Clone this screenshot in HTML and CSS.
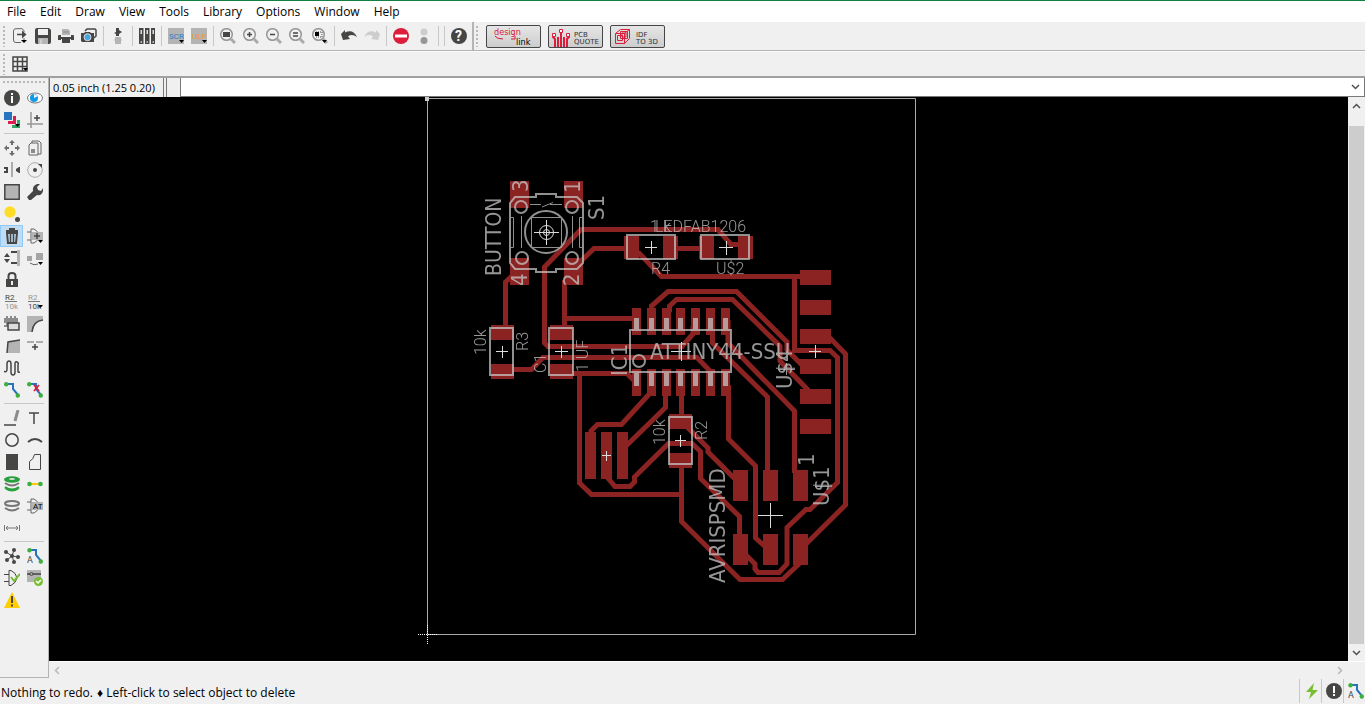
FILE: index.html
```html
<!DOCTYPE html>
<html lang="en">
<head>
    <meta charset="UTF-8">
    <title>Board</title>
    <link rel="stylesheet" href="styles.css">
</head>
<body>
    <nav class="menubar">
        <button>File</button>
        <button>Edit</button>
        <button>Draw</button>
        <button>View</button>
        <button>Tools</button>
        <button>Library</button>
        <button>Options</button>
        <button>Window</button>
        <button>Help</button>
    </nav>

    <div class="toolbar">
        <span class="grip"></span>
        <button class="tool" aria-label="Open"><svg viewBox="0 0 16 16"><path class="thin" d="M12 4V2.500L10 .7H4Q1.500 .7 1.500 3v9q0 2.500 2.500 2.500h5M12 10v2"/><path class="line" d="M5 6.500h6"/><path class="dark" d="M10 2.500l4.500 4-4.500 4z"/><path d="M9 12h6l-3 3z"/></svg></button>
        <button class="tool" aria-label="Save"><svg viewBox="0 0 16 16"><path class="dark" d="M2 0h12l2 2v12q0 2-2 2H2q-2 0-2-2V2q0-2 2-2z"/><path fill="#f0f0f0" d="M3 1h10v6H3z"/><path class="mid" d="M3 10h10v6H3z"/><path class="pale" d="M5 11h2v5H5z"/></svg></button>
        <button class="tool" aria-label="Print"><svg viewBox="0 0 16 16"><path class="mid" d="M4 1h6l2 2v4H4z"/><path d="M5 4h6" stroke="#8c8c8c"/><path class="dark" d="M0 8q0-1 1-1h2v2h10V7h2q1 0 1 1v4h-3v-1H3v1H0zM4 11h8v4H4z"/></svg></button>
        <button class="tool" aria-label="CAM processor"><svg viewBox="0 0 16 16"><path class="line" d="M4 3l2-2h8l1 1v6l-2 2"/><path class="dark" d="M0 5h3l1-1h5l1 1h3v9H1l-1-1z"/><circle cx="6.500" cy="9.200" r="3.500" fill="#45a9e6" stroke="#ddd"/></svg></button>
        <span class="sep"></span>
        <button class="tool" aria-label="Schematic"><svg viewBox="0 0 16 16"><path class="dark" d="M6 0h3v2l3 2-3 2v2H6V6L4 5l2-1z"/><path class="mid" d="M5 9h6v2l1 1-1 1v3H5v-3l-1-1 1-1z"/></svg></button>
        <span class="sep"></span>
        <button class="tool" aria-label="Library manager"><svg viewBox="0 0 16 16"><path class="dark" d="M0 0h4.500v16H0zM6 0h4.500v16H6zM12 0h4v16h-4z"/><path d="M1.500 2H3v4H1.500zM7.500 2H9v4H7.500zM13.500 2H15v4h-1.500z" fill="#ddd"/><path class="mid" d="M1.500 13H3v2H1.500zM7.500 13H9v2H7.500zM13.500 13H15v2h-1.500z"/></svg></button>
        <span class="sep"></span>
        <button class="tool" aria-label="Run script"><svg viewBox="0 0 16 16"><path class="mid" d="M0 0h16v16H0z"/><text class="lbl" x="1" y="11" fill="#3279c8">SCR</text><path d="M11 12h5l-2.500 3z"/></svg></button>
        <button class="tool" aria-label="Run ULP"><svg viewBox="0 0 16 16"><path class="mid" d="M0 0h16v16H0z"/><text class="lbl" x="1" y="11" fill="#f0962d">ULP</text><path d="M11 12h5l-2.500 3z"/></svg></button>
        <span class="sep"></span>
        <button class="tool" aria-label="Zoom to fit"><svg viewBox="0 0 16 16"><circle class="lens" cx="6.500" cy="6.500" r="5.800"/><path class="rod" d="M11 11l4 4"/><path class="dark" d="M3 4h7v5H3z"/></svg></button>
        <button class="tool" aria-label="Zoom in"><svg viewBox="0 0 16 16"><circle class="lens" cx="6.500" cy="6.500" r="5.800"/><path class="rod" d="M11 11l4 4"/><path class="line" d="M4 6.500h5M6.500 4v5"/></svg></button>
        <button class="tool" aria-label="Zoom out"><svg viewBox="0 0 16 16"><circle class="lens" cx="6.500" cy="6.500" r="5.800"/><path class="rod" d="M11 11l4 4"/><path class="line" d="M4 6.500h5"/></svg></button>
        <button class="tool" aria-label="Redraw"><svg viewBox="0 0 16 16"><circle class="lens" cx="6.500" cy="6.500" r="5.800"/><path class="rod" d="M11 11l4 4"/><path class="line" d="M4 5h5M4 8h5"/></svg></button>
        <button class="tool" aria-label="Zoom select"><svg viewBox="0 0 16 16"><circle class="lens" cx="6.500" cy="6.500" r="5.800"/><path class="rod" d="M11 11l4 4"/><path d="M4 4h6v5H4z" fill="none" stroke="#464644" stroke-dasharray="1"/><path d="M3 4h4v4H3zM10 12h5l-2.500 3z"/></svg></button>
        <span class="sep"></span>
        <button class="tool" aria-label="Undo"><svg viewBox="0 0 16 16"><path class="dark" d="M0 6l4-4v2.500q8-4 12 4.500-5-3.500-9-.5L9 11l-7 1z"/></svg></button>
        <button class="tool" aria-label="Redo" disabled><svg viewBox="0 0 16 16"><path class="pale" d="M16 6l-4-4v2.500Q4 .5 0 9q5-3.500 9-.5L7 11l7 1z"/></svg></button>
        <span class="sep"></span>
        <button class="tool" aria-label="Stop"><svg viewBox="0 0 16 16"><circle cx="8" cy="8" r="8" fill="#dc1e3c"/><path d="M2 6.500h12v3H2z" fill="#fff"/></svg></button>
        <button class="tool" aria-label="Go" disabled><svg viewBox="0 0 16 16"><circle class="pale" cx="8" cy="4" r="3.500"/><circle cx="8" cy="12.500" r="3.500" fill="#969696"/></svg></button>
        <span class="sep"></span>
        <span class="sep"></span>
        <button class="tool" aria-label="Help"><svg viewBox="0 0 16 16"><circle class="dark" cx="8" cy="8" r="8"/><text x="4" y="13" fill="#fff" class="mark">?</text></svg></button>
        <span class="bar"></span>
        <span class="grip"></span>
        <button class="service" aria-label="Design link"><svg viewBox="0 0 53 21"><text class="word" x="7" y="9" fill="#d9173a">design</text><text class="word" x="29" y="19">link</text><path d="M8 10q2 3 8 3M24 13h4v-3" fill="none" stroke="#d9173a"/></svg></button>
        <button class="service" aria-label="PCB quote"><svg viewBox="0 0 53 21"><path d="M6 21v-8L4 11V9M9 21V11M12 21V7M15 21V11M18 21v-8l2-2V9" fill="none" stroke="#dc1e3c" stroke-width="2"/><path d="M3.500 7.500h3v3h-3zM10.500 3.500h3v3h-3zM17.500 7.500h3v3h-3z" fill="#fff" stroke="#dc1e3c"/><text class="cap" x="25" y="11">PCB</text><text class="cap" x="25" y="18">QUOTE</text></svg></button>
        <button class="service" aria-label="IDF to 3D"><svg viewBox="0 0 53 21"><path d="M4.500 7.500l5-4h9v9l-5 5h-9zM4.500 7.500h9v10M13.500 7.500l5-4M6.500 9.500h5v5h-5zM9.500 5.500h7v7h-7z" fill="none" stroke="#dc1e3c"/><path d="M11 7h4v4h-4z" fill="none" stroke="#dc1e3c"/><text class="cap" x="25" y="11">IDF</text><text class="cap" x="25" y="18">TO 3D</text></svg></button>
    </div>

    <div class="toolbar second">
        <span class="grip"></span>
        <button class="tool" aria-label="Grid"><svg viewBox="0 0 16 16"><path d="M1 1h14v14H1zM1 5.500h14M1 10.500h14M5.500 1v14M10.500 1v14" fill="none" stroke="#464644" stroke-width="1.500"/><path d="M11 12h5l-2.500 3z"/></svg></button>
    </div>

    <main class="work">
        <aside class="palette">
            <span class="grip-top"></span>
            <button class="tool" aria-label="Info"><svg viewBox="0 0 16 16"><circle class="dark" cx="8" cy="8" r="8"/><path fill="#fff" d="M7 3h2v2H7zM7 6h2v7H7z"/></svg></button>
            <button class="tool" aria-label="Show"><svg viewBox="0 0 16 16"><ellipse cx="8" cy="8" rx="7.500" ry="5" fill="#fff" stroke="#777"/><circle cx="7" cy="8" r="4" fill="#0f9be6"/><path fill="#fff" d="M7 8V4l4 2z"/></svg></button>
            <button class="tool" aria-label="Layers"><svg viewBox="0 0 16 16"><path fill="#2873be" d="M0 0h8v8H0z"/><path fill="#dc1e50" d="M9 4h3v8H4V9h5z"/><path fill="#32a564" d="M13 8h3v8H8v-3h5z"/><path d="M11 12h5l-2.500 3z"/></svg></button>
            <button class="tool" aria-label="Mark"><svg viewBox="0 0 16 16"><path d="M4 0v16M0 12h16" stroke="#969696" stroke-width="1.500"/><path class="line" d="M7 6h6M10 3v6"/></svg></button>
            <span class="rule"></span>
            <button class="tool" aria-label="Move"><svg viewBox="0 0 16 16"><path fill="#6e6e6e" d="M8 0l3 3H9v2H7V3H5zM8 16l3-3H9v-2H7v2H5zM0 8l3-3v2h2v2H3v2zM16 8l-3-3v2h-2v2h2v2z"/></svg></button>
            <button class="tool" aria-label="Copy"><svg viewBox="0 0 16 16"><path class="thin" d="M5 3V1h7l2 2v11h-3M2 5l2-2h7v12H2z"/><path class="gray" d="M4 9h4v4H4z"/></svg></button>
            <button class="tool" aria-label="Mirror"><svg viewBox="0 0 16 16"><path d="M8 0v15" stroke="#969696" stroke-width="1.500"/><path class="dark" d="M0 5h4v6H0V9h2V7H0zM16 5h-1l-3 2v2l3 2h1z"/></svg></button>
            <button class="tool" aria-label="Rotate"><svg viewBox="0 0 16 16"><circle cx="8" cy="8" r="7.300" fill="none" stroke="#aaa"/><circle class="dark" cx="8" cy="8" r="2"/><path class="dark" d="M11 2h4v4z"/></svg></button>
            <button class="tool" aria-label="Group"><svg viewBox="0 0 16 16"><path class="line mid" d="M.8 .8h14.400v14.400H.8z"/></svg></button>
            <button class="tool" aria-label="Change"><svg viewBox="0 0 16 16"><path class="dark" d="M0 13l6-6q-1-5 4-7h3l-3 3 1 3 3 1 2-3v3q-1 5-6 4l-6 5H2z"/></svg></button>
            <button class="tool" aria-label="Paste"><svg viewBox="0 0 16 16"><circle cx="6" cy="6" r="5.700" fill="#ffdc28"/><circle class="dark" cx="13.500" cy="13.500" r="2.500"/></svg></button>
            <span></span>
            <button class="tool active" aria-label="Delete"><svg viewBox="0 0 16 16"><path d="M3 5l1 10h8l1-10z" fill="none" stroke="#464644" stroke-width="2"/><path class="dark" d="M2 2h12v2H2zM5 0h6v2H5z"/><path d="M6.500 5v9M9.500 5v9" stroke="#464644" stroke-width="1.500"/></svg></button>
            <button class="tool" aria-label="Add"><svg viewBox="0 0 16 16"><path class="thin" d="M0 4h4M0 12h4M4 1h3q4 2 6 7-2 5-6 7H4z"/><path class="mid" d="M5 4h11v8H5z"/><path class="line" d="M7 8h6M10 5v6"/><path d="M11 12h5l-2.500 3z"/></svg></button>
            <button class="tool" aria-label="Pinswap"><svg viewBox="0 0 16 16"><path class="dark" d="M3 3l3 4H0zM3 13l3-4H0zM7 1h6v2H7zM7 12h6v2H7z"/><path class="mid" d="M13 0h3v16h-3z"/></svg></button>
            <button class="tool" aria-label="Replace"><svg viewBox="0 0 16 16"><path fill="#a5a5a5" d="M0 6h5v5H0zM9 3h7v7H9z"/><path class="thin" d="M3 13q4 3 8 1"/><path d="M11 12h5l-2.500 3z"/></svg></button>
            <button class="tool" aria-label="Lock"><svg viewBox="0 0 16 16"><path class="dark" d="M2 7h12v8H2z"/><path d="M4.500 7V4q0-3 3.500-3t3.500 3v3" fill="none" stroke="#464644" stroke-width="2"/><path fill="#eee" d="M7 9h2v4H7z"/></svg></button>
            <span></span>
            <button class="tool" aria-label="Name"><svg viewBox="0 0 16 16"><text class="ref" x="1" y="6">R2</text><path d="M1 7.500h12" stroke="#777"/><text class="ref dim" x="1" y="15">10k</text></svg></button>
            <button class="tool" aria-label="Value"><svg viewBox="0 0 16 16"><text class="ref dim" x="1" y="6">R2</text><path d="M1 7.500h12" stroke="#777"/><text class="ref" x="1" y="15">10k</text><path d="M11 11h5l-2.500 3z"/></svg></button>
            <button class="tool" aria-label="Smash"><svg viewBox="0 0 16 16"><path fill="#8c8c8c" d="M0 2h2V0h2v2h2V0h2v2h2V0h2v2h2v7h-2v2H0V9h2V7H0z"/><path d="M4 7h11v7H4z" fill="#dcdcdc" stroke="#464644" stroke-width="1.500"/></svg></button>
            <button class="tool" aria-label="Miter"><svg viewBox="0 0 16 16"><path class="mid" d="M0 0h16v4Q6 5 5 16H0z"/><path d="M16 4Q6 5 5 16" fill="none" stroke="#464644" stroke-width="1.500"/></svg></button>
            <button class="tool" aria-label="Split"><svg viewBox="0 0 16 16"><path class="mid" d="M3 15L4 4l12-2v13z"/><path class="line" d="M3 15L4 4l12-2"/></svg></button>
            <button class="tool" aria-label="Optimize"><svg viewBox="0 0 16 16"><path d="M0 4h7M9 4h7" stroke="#969696" stroke-width="1.500"/><path class="line" d="M5 9h6M8 6v6"/></svg></button>
            <button class="tool" aria-label="Meander"><svg viewBox="0 0 16 16"><path class="line" d="M0 11q3 2 3-2V4q0-3 2-3t2 3v8q0 3 2 3t2-3V4q0-3 2-2t1 3v6q0 2 2 1"/></svg></button>
            <span></span>
            <button class="tool" aria-label="Route"><svg viewBox="0 0 16 16"><path class="wire" d="M2 2h7v5l5 6"/><circle class="green" cx="2.200" cy="2.200" r="2.200"/><circle class="green" cx="13.800" cy="13.500" r="2.200"/></svg></button>
            <button class="tool" aria-label="Ripup"><svg viewBox="0 0 16 16"><path class="wire" d="M2 2h7v5l5 6"/><circle class="green" cx="2.200" cy="2.200" r="2.200"/><circle class="green" cx="13.800" cy="13.500" r="2.200"/><path d="M7 3l5 6M12 3L7 9" stroke="#dc1e3c" stroke-width="1.800"/></svg></button>
            <span class="rule"></span>
            <button class="tool" aria-label="Line"><svg viewBox="0 0 16 16"><path d="M14 0L11 11" stroke="#8c8c8c" stroke-width="3"/><path class="line" d="M0 15h12"/></svg></button>
            <button class="tool" aria-label="Text"><svg viewBox="0 0 16 16"><path class="line" d="M2 3h10M7 3v11"/></svg></button>
            <button class="tool" aria-label="Circle"><svg viewBox="0 0 16 16"><circle class="line" cx="8" cy="8" r="6.200"/></svg></button>
            <button class="tool" aria-label="Arc"><svg viewBox="0 0 16 16"><path class="line heavy" d="M1 10q7-6 14 0"/></svg></button>
            <button class="tool" aria-label="Rectangle"><svg viewBox="0 0 16 16"><path class="dark" d="M2 0h12v16H2z"/></svg></button>
            <button class="tool" aria-label="Polygon"><svg viewBox="0 0 16 16"><path d="M2.500 15.500v-8q4-2 5-7h6v15z" fill="none" stroke="#464644"/></svg></button>
            <button class="tool" aria-label="Via"><svg viewBox="0 0 16 16"><path d="M1 11q7 5 14 0M1 12q7 5 14 0" fill="none" stroke="#28a03c" stroke-width="2"/><path d="M1 7q7 5 14 0" fill="none" stroke="#777" stroke-width="2"/><ellipse cx="8" cy="3.500" rx="8" ry="3.200" fill="#28a03c"/><ellipse cx="8" cy="3" rx="3" ry="1" fill="#ddd"/></svg></button>
            <button class="tool" aria-label="Signal"><svg viewBox="0 0 16 16"><path d="M3 8h10" stroke="#ffc800" stroke-width="2"/><circle class="green" cx="2.500" cy="8" r="2.300"/><circle class="green" cx="13.500" cy="8" r="2.300"/></svg></button>
            <button class="tool" aria-label="Hole"><svg viewBox="0 0 16 16"><path d="M1 10q7 5 14 0" fill="none" stroke="#777" stroke-width="2"/><ellipse cx="8" cy="5.500" rx="7" ry="2.500" fill="none" stroke="#777" stroke-width="2"/></svg></button>
            <button class="tool" aria-label="Attribute"><svg viewBox="0 0 16 16"><path class="thin" d="M0 4h4M0 12h4M4 1h3q4 2 6 7-2 5-6 7H4z"/><path class="mid" d="M5 4h11v8H5z"/><text class="lbl" x="6" y="11">AT</text></svg></button>
            <button class="tool" aria-label="Dimension"><svg viewBox="0 0 16 16"><path d="M.5 5v6M15.500 5v6M2 8h12M4 6L2 8l2 2M12 6l2 2-2 2" fill="none" stroke="#777"/></svg></button>
            <span></span>
            <span class="rule"></span>
            <button class="tool" aria-label="Ratsnest"><svg viewBox="0 0 16 16"><path d="M8 8L2 4M8 8l2-6M8 8l6 1M8 8l2 6M8 8l-5 4" stroke="#464644"/><g class="dark"><circle cx="8" cy="8" r="2"/><circle cx="2" cy="4" r="2"/><circle cx="10" cy="2" r="2"/><circle cx="14" cy="9" r="2"/><circle cx="10" cy="14" r="2"/><circle cx="3" cy="12" r="2"/></g></svg></button>
            <button class="tool" aria-label="Autorouter"><svg viewBox="0 0 16 16"><path class="wire" d="M2 2h7v5l5 6"/><circle class="green" cx="2.500" cy="2.200" r="2.200"/><circle class="green" cx="13.800" cy="13.500" r="2.200"/><text class="let" x="0" y="15">A</text></svg></button>
            <button class="tool" aria-label="ERC"><svg viewBox="0 0 16 16"><path d="M0 4.500h5M0 11.500h5M5 .5h2q5 2 6 7.500-1 5-6 7.500H5z" fill="none" stroke="#464644"/><path d="M7 7l3 4 6-7" fill="none" stroke="#78be32" stroke-width="2"/></svg></button>
            <button class="tool" aria-label="DRC"><svg viewBox="0 0 16 16"><path class="mid" d="M0 0h14v12H0z"/><path d="M0 4h3M6 4h8" stroke="#464644" stroke-width="1.500"/><circle cx="4.500" cy="4" r="1.500" fill="none" stroke="#464644"/><circle cx="11.500" cy="11.500" r="4.500" fill="#78be32"/><path d="M9 11l2 2 3-3" fill="none" stroke="#fff" stroke-width="1.500"/></svg></button>
            <button class="tool" aria-label="Errors"><svg viewBox="0 0 16 16"><path fill="#ffcd00" d="M8 0l8 16H0z"/><path class="dark" d="M7 4h2v7H7zM7 12.500h2v2H7z"/></svg></button>
        </aside>

        <section class="editor">
            <div class="command">
                <output class="coords">0.05 inch (1.25 0.20)</output>
                <span class="gap-box"></span>
                <div class="entry">
                    <input type="text" aria-label="Command">
                    <button aria-label="History"><svg viewBox="0 0 9 6"><path d="M1 1l3.500 3.500L8 1"/></svg></button>
                </div>
            </div>
            <div class="canvas-row">
                <svg class="board" viewBox="49 97 1299 564">
                    <!-- board outline and origin -->
                    <path class="frame" d="M427.500 98.500h488v536h-488z"/>
                    <path fill="#ccc" d="M425 97h4v4h-4z"/>
                    <path d="M418 634.500h20M427.500 625v20" stroke="#fff" stroke-dasharray="1"/>

                    <!-- top copper -->
                    <g class="copper">
                        <path d="M740 244.500h-9L718 229.500H581L544.500 267v76l3.500 3.500h134L693 334v-8"/>
                        <path d="M580 262L594 248.500h34M673 248.500h30"/>
                        <path d="M638 252l23.500 24.500H802M794.500 276.500v74H830l7.500 7V482.500L810 509.500h-4L787 527.500V564l-8 8.500h-21l-3-3.500v-5l-9-9"/>
                        <path d="M828 336l17.500 18V505L806 544"/>
                        <path d="M512 276l-6.500 6v46M564.500 280v48M564.500 318.500H634"/>
                        <path d="M512 369.500h19.500l11.500-12h154L710 371"/>
                        <path d="M572 373.500h55l8 8M579.500 373v110l12 11.500h90"/>
                        <path d="M651.500 312v-6L668 291.500h68.500L787 342v8l15 15"/>
                        <path d="M669.500 312v-6l7-6.500h56L780 346v15l29 30"/>
                        <path d="M712.500 330v13l55 54v76"/>
                        <path d="M728 320v23l66.500 68v62"/>
                        <path d="M728.500 385v54l27 27v72l9 8"/>
                        <path d="M681.500 390v28M681.500 466v55.500l58.500 58h42.500L801 562"/>
                        <path d="M652 391l-30.500 33.500h-24L591 431v4"/>
                        <path d="M665.500 390v17.500L625 447"/>
                        <path d="M607 477l8 9.500h15l4.500-4.500v-5l34-33.500H692l8.500 8v27l39 38V537"/>
                        <path d="M687 427l21 21v4l27 27"/>
                    </g>
                    <g class="pads">
                        <path d="M510 181h19v27h-19zM564 181h19v27h-19zM510 258h19v27h-19zM564 258h19v27h-19z"/>
                        <path d="M624 236h15v23h-15zM663 236h15v23h-15zM699 236h15v23h-15zM738 236h15v23h-15z"/>
                        <path d="M491 325h23v15h-23zM491 364h23v15h-23zM550 325h23v15h-23zM550 364h23v15h-23z"/>
                        <path d="M669 414h23v15h-23zM669 453h23v15h-23z"/>
                        <path d="M800 270h31v15h-31zM800 300h31v15h-31zM800 329h31v15h-31zM800 359h31v15h-31zM800 389h31v15h-31zM800 419h31v15h-31z"/>
                        <path d="M585 432h11v47h-11zM601 432h11v47h-11zM617 432h11v47h-11z"/>
                        <path d="M733 470h15v31h-15zM763 470h15v31h-15zM793 470h15v31h-15zM733 534h15v31h-15zM763 534h15v31h-15zM793 534h15v31h-15z"/>
                        <path d="M632 308h9v27h-9zM647 308h9v27h-9zM662 308h9v27h-9zM676 308h9v27h-9zM691 308h9v27h-9zM706 308h9v27h-9zM721 308h9v27h-9z"/>
                        <path d="M632 369h9v27h-9zM647 369h9v27h-9zM662 369h9v27h-9zM676 369h9v27h-9zM691 369h9v27h-9zM706 369h9v27h-9zM721 369h9v27h-9z"/>
                    </g>

                    <!-- placement outlines -->
                    <g class="place">
                        <path d="M515 197h21v-3h20v3h21l6 6v60l-6 6h-21v3h-20v-3h-21l-5-6v-60z"/>
                        <circle cx="546" cy="232" r="21"/>
                        <circle cx="521" cy="207" r="6"/><circle cx="572" cy="207" r="6"/>
                        <circle cx="522" cy="258" r="6"/><circle cx="572" cy="258" r="6"/>
                        <path class="fine" d="M531.500 217.500h30v30h-30zM521.500 216v32M572.500 216v32M510 217.500h3.500v30H510M583 217.500h-3.500v30h3.500M530 204.500h11M542 207l11-4.500M550 204.500h12"/>
                        <path d="M627 235h48v24h-48zM701 235h48v24h-48zM490 328h23v47h-23zM549 328h24v47h-24zM669 417h23v47h-23zM630 330h101v42H630z"/>
                        <circle cx="639" cy="361" r="6"/>
                        <path class="pins" d="M634 318h5v12h-5zM649 318h5v12h-5zM664 318h5v12h-5zM678 318h5v12h-5zM693 318h5v12h-5zM708 318h5v12h-5zM723 318h5v12h-5zM634 372h5v14h-5zM649 372h5v14h-5zM664 372h5v14h-5zM678 372h5v14h-5zM693 372h5v14h-5zM708 372h5v14h-5zM723 372h5v14h-5z"/>
                    </g>
                    <g class="origins">
                        <path d="M534 232.500h25M546.500 220v25M645 247.500h12M651.500 241v13M719 247.500h14M726.500 241v14M496 351.500h12M502.500 346v12M555 351.500h13M561.500 346v12M671 351.500h20M681.500 342v19M809 351.500h12M815.500 345v13M675 440.500h11M680.500 435v12M602 455.500h9M606.500 451v10M758 515.500h25M770.500 503v25"/>
                        <circle cx="546.500" cy="232.500" r="7"/><circle cx="546.500" cy="232.500" r="3"/>
                        <path class="soft" d="M778 369.500h17M815 486.500h17M786.500 363v12"/>
                    </g>

                    <!-- names and values -->
                    <g class="big">
                        <text x="650" y="359">ATTINY44-SSU</text>
                        <text class="tight" transform="translate(501 276) rotate(-90)">BUTTON</text>
                        <text transform="translate(604 220) rotate(-90)">S1</text>
                        <text transform="translate(528 192) rotate(-90)">3</text>
                        <text transform="translate(580 193) rotate(-90)">1</text>
                        <text transform="translate(527 286) rotate(-90)">4</text>
                        <text transform="translate(579 286) rotate(-90)">2</text>
                        <text transform="translate(627 376) rotate(-90)">IC1</text>
                        <text transform="translate(792 389) rotate(-90)">U$4</text>
                        <text transform="translate(829 506) rotate(-90)">U$1</text>
                        <text transform="translate(814 466) rotate(-90)">1</text>
                        <text transform="translate(725 583) rotate(-90)">AVRISPSMD</text>
                    </g>
                    <g class="small">
                        <text x="650" y="232">1</text>
                        <text x="663" y="232">k</text>
                        <text x="655" y="232">LEDFAB1206</text>
                        <text x="651" y="274">R4</text>
                        <text x="716" y="274">U$2</text>
                        <text transform="translate(486 355) rotate(-90)">10k</text>
                        <text transform="translate(528 351) rotate(-90)">R3</text>
                        <text transform="translate(546 373) rotate(-90)">C1</text>
                        <text transform="translate(588 372) rotate(-90)">1 UF</text>
                        <text transform="translate(665 445) rotate(-90)">10k</text>
                        <text transform="translate(707 440) rotate(-90)">R2</text>
                    </g>
                </svg>
                <div class="vscroll">
                    <button aria-label="Scroll up"><svg viewBox="0 0 9 6"><path d="M1 5l3.500-3.500L8 5"/></svg></button>
                    <span class="thumb"></span>
                    <button aria-label="Scroll down"><svg viewBox="0 0 9 6"><path d="M1 1l3.500 3.500L8 1"/></svg></button>
                </div>
            </div>
            <div class="hscroll">
                <button aria-label="Scroll left" disabled><svg viewBox="0 0 6 9"><path d="M5 1L1.500 4.500 5 8"/></svg></button>
                <button aria-label="Scroll right" disabled><svg viewBox="0 0 6 9"><path d="M1 1l3.500 3.500L1 8"/></svg></button>
            </div>
        </section>
    </main>

    <footer class="status">
        <p><span>Nothing to redo.</span><span>♦ Left-click to select object to delete</span></p>
        <button aria-label="Live link"><svg viewBox="0 0 16 16"><path fill="#78be32" d="M10 0L2 9h5l-2 7 9-9H8.500z"/></svg></button>
        <button aria-label="Warnings"><svg viewBox="0 0 16 16"><circle class="dark" cx="8" cy="8" r="8"/><path fill="#fff" d="M7 3h2v7H7zM7 11h2v2H7z"/></svg></button>
        <button aria-label="Autorouter status"><svg viewBox="0 0 16 16"><path class="wire" d="M2 2h7v5l5 6"/><circle class="green" cx="2.500" cy="2.200" r="2.200"/><circle class="green" cx="13.800" cy="13.500" r="2.200"/><text class="let" x="0" y="15">A</text></svg></button>
    </footer>
</body>
</html>
```
FILE: styles.css
```css
* {
    box-sizing: border-box;
}
body {
    margin: 0;
    height: 100vh;
    display: flex;
    flex-direction: column;
    overflow: hidden;
    background-color: #f0f0f0;
    color: #000;
    font-family: "Open Sans", "Noto Sans", sans-serif;
    font-size: 12px;
}
button {
    margin: 0;
    padding: 0;
    border: none;
    background: none;
    font: inherit;
    color: inherit;
}
svg {
    display: block;
}

/* menu */
.menubar {
    display: flex;
    flex: none;
    height: 22px;
    border-top: 1px solid #118043;
    background-color: #fff;
}
.menubar button {
    padding: 0 7px;
}

/* toolbars */
.toolbar {
    display: flex;
    flex: none;
    align-items: center;
    height: 29px;
    border-bottom: 1px solid #b4b4b4;
}
.toolbar.second {
    height: 27px;
    border-top: 1px solid #fafafa;
    border-bottom: 2px solid #a0a0a0;
}
.grip {
    width: 2px;
    height: 21px;
    margin: 0 3px;
    background: repeating-linear-gradient(#b9b9b9 0 2px, transparent 2px 4px);
}
.tool {
    display: flex;
    flex: none;
    align-items: center;
    justify-content: center;
    width: 23px;
    height: 22px;
}
.tool svg {
    width: 16px;
    height: 16px;
}
.toolbar .tool {
    padding-left: 1px;
}
.sep {
    flex: none;
    width: 1px;
    height: 20px;
    margin: 0 2px 0 3px;
    background-color: #c8c8c8;
}
.bar {
    width: 2px;
    height: 28px;
    margin: 0 0 0 2px;
    background-color: #b4b4b4;
}
.bar + .grip {
    margin-left: 2px;
    margin-right: 8px;
}
.service {
    width: 55px;
    height: 23px;
    margin-right: 7px;
    border: 1px solid #464646;
    border-radius: 2px;
    background: linear-gradient(#e6e6e6, #cdcdcd);
}
.service svg {
    width: 53px;
    height: 21px;
}
.word {
    font: 9px "DejaVu Sans Condensed", sans-serif;
}
.cap {
    font: 7px "DejaVu Sans", sans-serif;
    fill: #323232;
}

/* icon parts */
.dark {
    fill: #464644;
}
.mid {
    fill: #b4b4b4;
}
.gray {
    fill: #8c8c8c;
}
.pale {
    fill: #cdcdcd;
}
.green {
    fill: #3caf3c;
}
.line {
    fill: none;
    stroke: #464644;
    stroke-width: 1.5px;
}
.line.mid {
    fill: #b4b4b4;
}
.line.heavy {
    stroke-width: 2px;
}
.thin {
    fill: none;
    stroke: #646464;
}
.wire {
    fill: none;
    stroke: #2873be;
    stroke-width: 2px;
}
.lens {
    fill: #f0f0f0;
    stroke: #969696;
    stroke-width: 1.5px;
}
.rod {
    stroke: #aaa;
    stroke-width: 3px;
}
.lbl {
    font: 8px Roboto, sans-serif;
}
.ref {
    font: 8px Roboto, sans-serif;
    fill: #464644;
}
.ref.dim {
    fill: #969696;
}
.let {
    font: 9px Roboto, sans-serif;
    fill: #464644;
}
.mark {
    font: bold 14px Roboto, sans-serif;
}

/* tool palette */
.work {
    display: flex;
    flex: 1;
    min-height: 0;
}
.palette {
    display: grid;
    flex: none;
    grid-template-columns: 23px 23px;
    align-content: start;
    width: 49px;
    padding-top: 3px;
    border-right: 1px solid #b4b4b4;
    border-bottom: 1px solid #b4b4b4;
}
.palette .tool {
    padding-left: 1px;
}
.grip-top {
    grid-column: 1 / 3;
    height: 2px;
    margin: 0 0 4px 3px;
    background: repeating-linear-gradient(90deg, #b9b9b9 0 2px, transparent 2px 4px);
}
.rule {
    grid-column: 1 / 3;
    height: 1px;
    margin: 2px 2px 3px 4px;
    background-color: #c8c8c8;
}
.active {
    border: 1px solid #90c8f6;
    background-color: #c0dcf3;
}

/* command line */
.editor {
    display: flex;
    flex: 1;
    flex-direction: column;
    min-width: 0;
}
.command {
    display: flex;
    flex: none;
    height: 19px;
}
.coords {
    width: 115px;
    padding: 1px 0 0 3px;
    border-left: 1px solid #787878;
    border-right: 1px solid #787878;
    font-size: 11px;
    line-height: 18px;
    white-space: nowrap;
}
.gap-box {
    width: 13px;
    margin: 0 1px 0 2px;
    border-left: 1px solid #787878;
    background-color: #f0f0f0;
}
.entry {
    display: flex;
    flex: 1;
    align-items: center;
    border: 1px solid #787878;
    border-top: none;
    background-color: #fff;
}
.entry input {
    flex: 1;
    min-width: 0;
    height: 17px;
    padding: 0 4px;
    border: none;
    outline: none;
    background: none;
    font: inherit;
}
.entry button {
    padding: 0 4px;
}
.entry svg, .vscroll svg {
    width: 9px;
    height: 6px;
}
.entry path, .vscroll path, .hscroll path {
    fill: none;
    stroke: #505050;
    stroke-width: 1.5px;
}

/* drawing area */
.canvas-row {
    display: flex;
    flex: 1;
    min-height: 0;
}
.board {
    flex: 1;
    min-width: 0;
    height: 100%;
    background-color: #000;
}
.frame {
    fill: none;
    stroke: #aaa;
}
.copper {
    fill: none;
    stroke: #8c2323;
    stroke-width: 5px;
}
.pads {
    fill: #8c2323;
}
.place {
    fill: none;
    stroke: #c8c8c8;
    stroke-width: 2px;
    opacity: 0.72;
}
.place .fine {
    stroke-width: 1px;
}
.place .pins {
    fill: #c8c8c8;
    stroke: none;
}
.origins {
    fill: none;
    stroke: #dcdcdc;
}
.origins .soft {
    stroke: #969696;
}
.big {
    fill: #c8c8c8;
    opacity: 0.75;
    font: 22px "DejaVu Sans Condensed", "DejaVu Sans", sans-serif;
}
.big .tight {
    font-size: 21px;
}
.small {
    fill: #c8c8c8;
    opacity: 0.75;
    font: 300 16px Roboto, sans-serif;
}

/* scrollbars */
.vscroll {
    display: flex;
    flex: none;
    flex-direction: column;
    width: 17px;
}
.vscroll button {
    display: flex;
    align-items: center;
    justify-content: center;
    height: 17px;
}
.vscroll .thumb {
    flex: 1;
    margin: 12px 1px 0;
    background-color: #cdcdcd;
}
.hscroll {
    display: flex;
    flex: none;
    justify-content: space-between;
    height: 17px;
    padding: 0 22px 0 5px;
    border-top: 1px solid #fff;
}
.hscroll svg {
    width: 6px;
    height: 9px;
}
.hscroll path {
    stroke: #b9b9b9;
}

/* status line */
.status {
    display: flex;
    flex: none;
    align-items: center;
    height: 26px;
}
.status p {
    display: flex;
    flex: 1;
    gap: 4px;
    margin: 0;
    padding: 2px 0 0 1px;
}
.status button {
    display: flex;
    align-items: center;
    justify-content: flex-end;
    width: 22px;
    height: 24px;
    padding-right: 1px;
    border-left: 1px solid #c8c8c8;
}
.status svg {
    width: 16px;
    height: 16px;
}
```
